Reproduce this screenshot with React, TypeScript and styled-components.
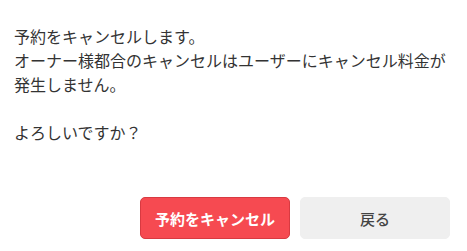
import React from "react";
import styled, { createGlobalStyle } from "styled-components";

const GlobalStyle = createGlobalStyle`
  html, body {
    margin: 0;
    padding: 0;
    background: #ffffff;
  }
  body {
    font-family: "Noto Sans CJK JP", "Noto Sans", sans-serif;
    color: #333333;
  }
`;

const Dialog = styled.div`
  width: 467px;
  height: 251px;
  box-sizing: border-box;
  padding: 24px 17px 0 14px;
  display: flex;
  flex-direction: column;
`;

const Message = styled.p`
  margin: 0;
  font-size: 16px;
  line-height: 24px;
  white-space: pre-line;
`;

const Actions = styled.div`
  margin-top: 53px;
  display: flex;
  justify-content: flex-end;
  gap: 10px;
`;

const Button = styled.button<{ $variant: "danger" | "neutral" }>`
  width: 150px;
  height: 42px;
  box-sizing: border-box;
  border-radius: 5px;
  font-family: "Noto Sans CJK JP", sans-serif;
  font-size: 15px;
  cursor: pointer;
  padding: 0;
  border: 1px solid
    ${(p) => (p.$variant === "danger" ? "#d83a41" : "#efefef")};
  background: ${(p) => (p.$variant === "danger" ? "#f64a51" : "#efefef")};
  color: ${(p) => (p.$variant === "danger" ? "#ffffff" : "#444444")};
  font-weight: ${(p) => (p.$variant === "danger" ? 700 : 500)};
`;

const App: React.FC = () => {
  return (
    <>
      <GlobalStyle />
      <Dialog>
        <Message>
          {"予約をキャンセルします。\nオーナー様都合のキャンセルはユーザーにキャンセル料金が\n発生しません。\n\nよろしいですか？"}
        </Message>
        <Actions>
          <Button $variant="danger">予約をキャンセル</Button>
          <Button $variant="neutral">戻る</Button>
        </Actions>
      </Dialog>
    </>
  );
};

export default App;
